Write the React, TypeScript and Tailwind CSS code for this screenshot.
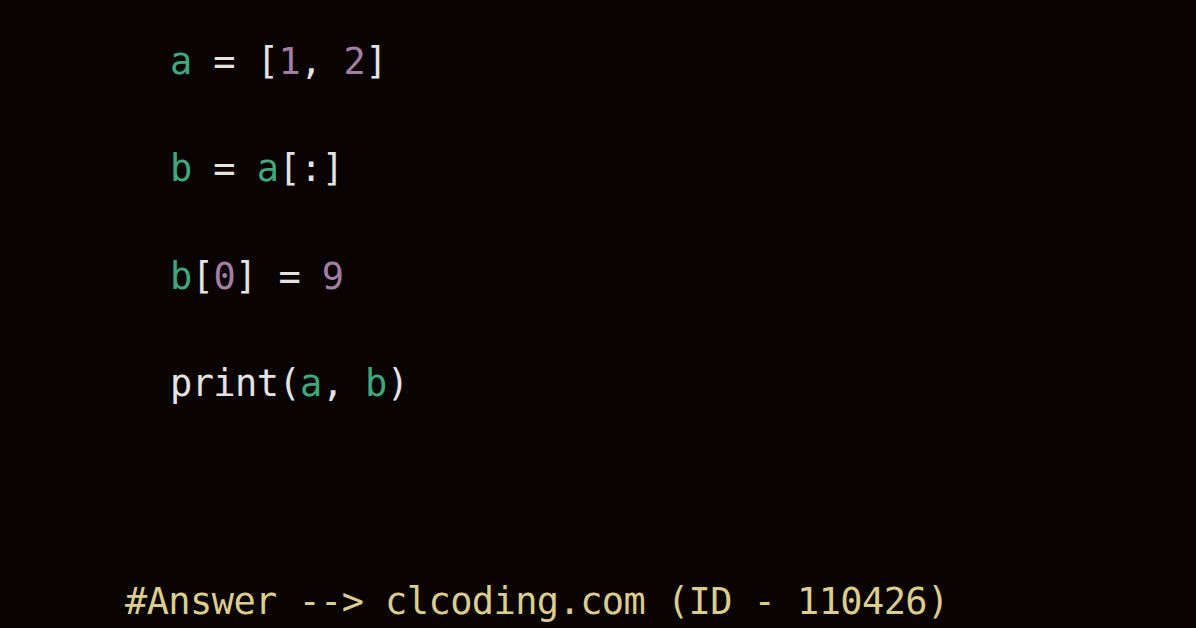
import React from "react";

const G = "text-[#3fa87c]";
const P = "text-[#a27fa2]";
const W = "text-[#e4e2e2]";

const App = () => {
  return (
    <div className="h-[628px] w-[1196px] overflow-hidden bg-[#0a0303] font-['DejaVu_Sans_Mono',monospace] text-[37px] tracking-[-0.6px]">
      {/* code lines */}
      <div className="flex flex-col pl-[170px] pt-[37px]">
        <div className="h-[107px] leading-[50px]">
          <span className={G}>a</span>
          <span className={W}> = [</span>
          <span className={P}>1</span>
          <span className={W}>, </span>
          <span className={P}>2</span>
          <span className={W}>]</span>
        </div>
        <div className="h-[108px] leading-[50px]">
          <span className={G}>b</span>
          <span className={W}> = </span>
          <span className={G}>a</span>
          <span className={W}>[:]</span>
        </div>
        <div className="h-[107px] leading-[50px]">
          <span className={G}>b</span>
          <span className={W}>[</span>
          <span className={P}>0</span>
          <span className={W}>] = </span>
          <span className={P}>9</span>
        </div>
        <div className="h-[50px] leading-[50px]">
          <span className={W}>print(</span>
          <span className={G}>a</span>
          <span className={W}>, </span>
          <span className={G}>b</span>
          <span className={W}>)</span>
        </div>
      </div>

      {/* answer line */}
      <div className="pl-[125px] pt-[168px] leading-[50px] text-[#dccc8e]">
        #Answer --&gt; clcoding.com (ID - 110426)
      </div>
    </div>
  );
};

export default App;
